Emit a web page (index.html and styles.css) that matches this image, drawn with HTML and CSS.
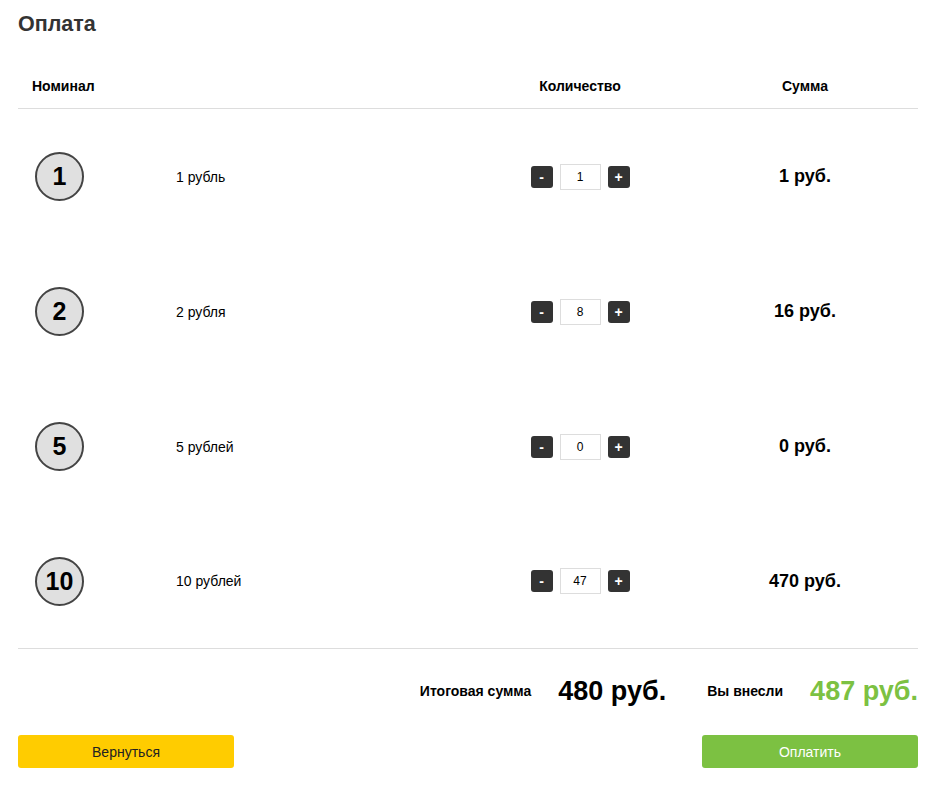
FILE: index.html
```html
<!DOCTYPE html>
<html lang="ru">
<head>
<meta charset="utf-8">
<title>Оплата</title>
<link rel="stylesheet" href="styles.css">
</head>
<body>
<div class="page">
  <h1 class="title">Оплата</h1>
  <div class="table">
    <div class="row head">
      <div class="cell c-nom">Номинал</div>
      <div class="cell"></div>
      <div class="cell c-qty">Количество</div>
      <div class="cell c-sum">Сумма</div>
    </div>
    <div class="row item">
      <div class="cell c-coin"><span class="coin">1</span></div>
      <div class="cell c-label">1 рубль</div>
      <div class="cell c-qty"><div class="stepper"><button class="step">-</button><input class="qty" value="1"><button class="step">+</button></div></div>
      <div class="cell c-sum amount">1 руб.</div>
    </div>
    <div class="row item">
      <div class="cell c-coin"><span class="coin">2</span></div>
      <div class="cell c-label">2 рубля</div>
      <div class="cell c-qty"><div class="stepper"><button class="step">-</button><input class="qty" value="8"><button class="step">+</button></div></div>
      <div class="cell c-sum amount">16 руб.</div>
    </div>
    <div class="row item">
      <div class="cell c-coin"><span class="coin">5</span></div>
      <div class="cell c-label">5 рублей</div>
      <div class="cell c-qty"><div class="stepper"><button class="step">-</button><input class="qty" value="0"><button class="step">+</button></div></div>
      <div class="cell c-sum amount">0 руб.</div>
    </div>
    <div class="row item last">
      <div class="cell c-coin"><span class="coin">10</span></div>
      <div class="cell c-label">10 рублей</div>
      <div class="cell c-qty"><div class="stepper"><button class="step">-</button><input class="qty" value="47"><button class="step">+</button></div></div>
      <div class="cell c-sum amount">470 руб.</div>
    </div>
  </div>
  <div class="totals">
    <span class="t-label">Итоговая сумма</span>
    <span class="t-value">480 руб.</span>
    <span class="t-label t-paid">Вы внесли</span>
    <span class="t-value green">487 руб.</span>
  </div>
  <div class="actions">
    <button class="btn btn-back">Вернуться</button>
    <button class="btn btn-pay">Оплатить</button>
  </div>
</div>
</body>
</html>
```
FILE: styles.css
```css
* { box-sizing: border-box; }
body {
  margin: 0;
  font-family: "Liberation Sans", Arial, sans-serif;
  color: #000;
  background: #fff;
}
.page {
  width: 938px;
  padding: 0 20px 0 18px;
}
.title {
  margin: 0;
  padding-top: 11px;
  height: 64px;
  font-size: 21.5px;
  line-height: 26px;
  font-weight: bold;
  color: #333;
}
.table { width: 900px; }
.row {
  display: grid;
  grid-template-columns: 158px 1fr 224px 226px;
  align-items: center;
}
.head {
  height: 45px;
  border-bottom: 1px solid #ddd;
  font-size: 14px;
  font-weight: bold;
}
.c-nom { padding-left: 14px; }
.c-qty, .c-sum { text-align: center; }
.c-qty { display: flex; justify-content: center; }
.item { height: 135px; }
.item.last { border-bottom: 1px solid #ddd; }
.c-coin { padding-left: 17px; }
.coin {
  display: flex;
  align-items: center;
  justify-content: center;
  width: 49px;
  height: 49px;
  border: 2px solid #444;
  border-radius: 50%;
  background: #e0e0e0;
  font-size: 25px;
  font-weight: bold;
}
.c-label { font-size: 14px; }
.stepper { display: flex; align-items: center; gap: 7px; }
.step {
  width: 22px;
  height: 22px;
  padding: 0;
  border: none;
  border-radius: 3px;
  background: #333;
  color: #fff;
  font-family: "Liberation Sans", Arial, sans-serif;
  font-size: 14px;
  font-weight: bold;
  line-height: 22px;
}
.qty {
  width: 41px;
  height: 26px;
  border: 1px solid #ddd;
  text-align: center;
  font-family: "Liberation Sans", Arial, sans-serif;
  font-size: 12px;
  padding: 0;
  color: #000;
  background: #fff;
}
.amount { font-size: 18px; font-weight: bold; }
.totals {
  display: flex;
  justify-content: flex-end;
  align-items: center;
  height: 84px;
  width: 900px;
}
.t-label { font-size: 14px; font-weight: bold; margin-right: 27px; }
.t-value { font-size: 27px; font-weight: bold; }
.t-paid { margin-left: 41px; }
.green { color: #7cc142; }
.actions {
  display: flex;
  justify-content: space-between;
  width: 900px;
  padding-top: 2px;
}
.btn {
  width: 216px;
  height: 33px;
  border: none;
  border-radius: 3px;
  font-family: "Liberation Sans", Arial, sans-serif;
  font-size: 14px;
}
.btn-back { background: #ffcc00; color: #222; }
.btn-pay { background: #7cc142; color: #fff; }
```
